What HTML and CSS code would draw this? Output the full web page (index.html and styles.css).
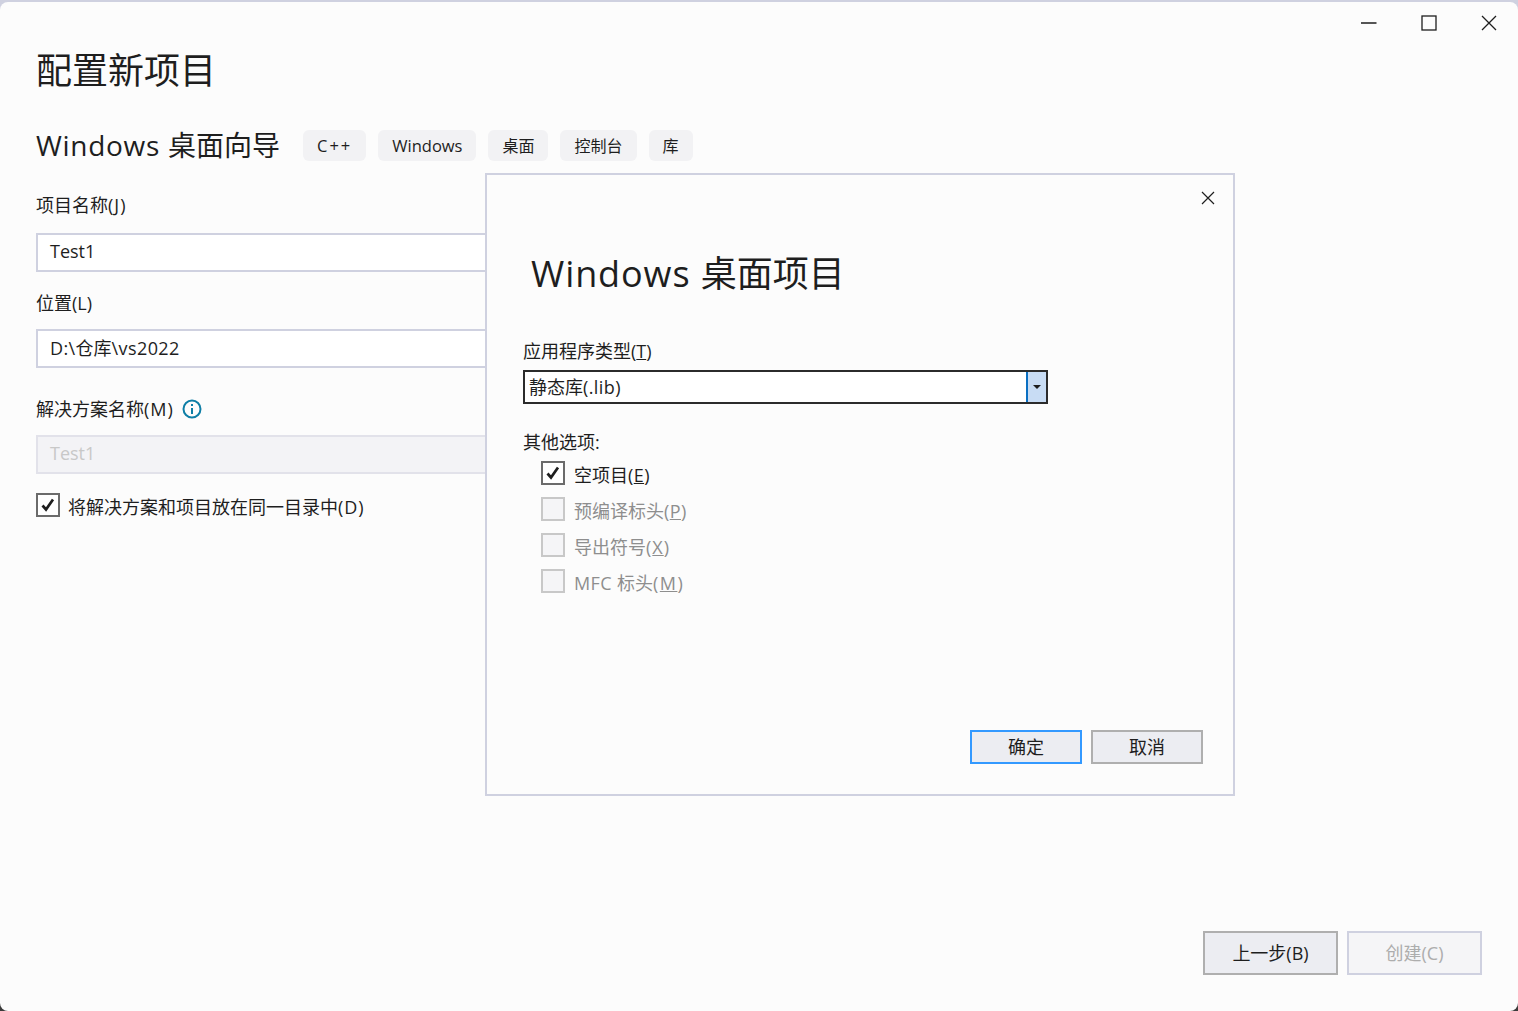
FILE: index.html
```html
<!DOCTYPE html>
<html lang="zh-CN">
<head>
<meta charset="utf-8">
<title>配置新项目</title>
<link rel="stylesheet" href="styles.css">
</head>
<body>
<div class="window">
  <div class="controls">
    <svg class="ctl" viewBox="0 0 16 16"><path d="M0 8h15.5" /></svg>
    <svg class="ctl" viewBox="0 0 16 16"><rect x="1" y="1" width="14" height="14" /></svg>
    <svg class="ctl" viewBox="0 0 16 16"><path d="M1 1l14 14M15 1L1 15" /></svg>
  </div>
  <main class="page">
    <h1 class="page-title">配置新项目</h1>
    <div class="subhead">
      <h2 class="subtitle"><span class="wide">Windows </span>桌面向导</h2>
      <div class="tags">
        <span class="tag tag-latin tag-plus">C++</span>
        <span class="tag tag-latin">Windows</span>
        <span class="tag">桌面</span>
        <span class="tag">控制台</span>
        <span class="tag">库</span>
      </div>
    </div>
    <form class="form">
      <div class="field-label first"><span>项目名称<span class="lat">(J)</span></span></div>
      <div class="input">Test1</div>
      <div class="field-label second"><span>位置(L)</span></div>
      <div class="input input-path"><span class="lat">D:\</span>仓库<span class="lat">\vs2022</span></div>
      <div class="field-label third"><span>解决方案名称<span class="lat">(M)</span></span>
        <svg class="info" viewBox="0 0 20 20"><circle cx="10" cy="10" r="8.5"/><path d="M10 9v6M10 5v2"/></svg>
      </div>
      <div class="input input-disabled">Test1</div>
      <label class="check check-main"><span class="box on"><svg viewBox="0 0 20 20"><path d="M4.5 10.5l3.5 4L15 4.5"/></svg></span><span class="check-text">将解决方案和项目放在同一目录中<span class="lat">(D)</span></span></label>
    </form>
    <div class="actions">
      <button class="btn btn-big" type="button">上一步(B)</button>
      <button class="btn btn-big btn-disabled" type="button">创建(C)</button>
    </div>
  </main>

  <section class="dialog">
    <div class="dialog-top">
      <svg class="dialog-close" viewBox="0 0 14 14"><path d="M1 1l12 12M13 1L1 13"/></svg>
    </div>
    <h2 class="dialog-title"><span class="wide">Windows </span>桌面项目</h2>
    <div class="dlabel">应用程序类型(<u>T</u>)</div>
    <div class="select">
      <span class="select-value">静态库<span class="lat-s">(.lib)</span></span>
      <span class="select-btn"><i class="caret"></i></span>
    </div>
    <div class="dlabel other">其他选项:</div>
    <div class="options">
      <label class="check opt"><span class="box on"><svg viewBox="0 0 20 20"><path d="M4.5 10.5l3.5 4L15 4.5"/></svg></span><span class="check-text">空项目<span class="lat-s">(<u>E</u>)</span></span></label>
      <label class="check opt off"><span class="box"></span><span class="check-text">预编译标头<span class="lat-s">(<u>P</u>)</span></span></label>
      <label class="check opt off"><span class="box"></span><span class="check-text">导出符号<span class="lat">(<u>X</u>)</span></span></label>
      <label class="check opt off"><span class="box"></span><span class="check-text"><span class="lat-s">MFC </span>标头<span class="lat-m">(<u>M</u>)</span></span></label>
    </div>
    <div class="dialog-actions">
      <button class="btn btn-small btn-primary" type="button">确定</button>
      <button class="btn btn-small" type="button">取消</button>
    </div>
  </section>
</div>
</body>
</html>
```
FILE: styles.css
```css
* { box-sizing: border-box; }
html, body { margin: 0; height: 100%; overflow: hidden; }
body {
  background: linear-gradient(#cfd1e0 0, #cfd1e0 60%, #3a3a3a 100%);
  font-family: "Open Sans", "Noto Sans CJK SC", sans-serif;
  font-size: 18px;
  color: #1e1e1e;
}
.window {
  position: relative;
  height: 1009px;
  margin-top: 2px;
  background: #fcfcfc;
  border-radius: 8px;
  overflow: hidden;
}
.controls {
  position: absolute;
  top: 13px;
  right: 21px;
  display: flex;
  gap: 44px;
}
.ctl { width: 16px; height: 16px; fill: none; stroke: #1e1e1e; stroke-width: 1.3; display: block; }
.page {
  height: 100%;
  padding: 0 36px 36px;
  display: flex;
  flex-direction: column;
}
.page-title { margin: 45px 0 0; font-size: 36px; line-height: 48px; font-weight: 400; }
.subhead { display: flex; align-items: center; margin-top: 35px; height: 31px; }
.subtitle { margin: 0; font-size: 28px; line-height: 31px; font-weight: 400; width: 267px; white-space: nowrap; }
.wide { letter-spacing: 0.7px; }
.dialog-title .wide { letter-spacing: 0.9px; }
.tags { display: flex; gap: 12px; }
.tag {
  height: 31px;
  padding: 0 14px;
  background: #f2f2f4;
  border-radius: 6px;
  font-size: 16px;
  line-height: 33px;
  white-space: nowrap;
}
.tag-latin { font-size: 16.5px; line-height: 31px; }
.tag-plus { letter-spacing: 2px; }
.form { width: 900px; display: flex; flex-direction: column; }
.field-label { line-height: 26px; display: flex; align-items: center; gap: 8px; }
.lat { letter-spacing: 1px; }
.lat-s { letter-spacing: 0.4px; }
.lat-m { letter-spacing: 1.4px; }
.input-path .lat { letter-spacing: 0.4px; }
.first { margin-top: 31px; margin-bottom: 15px; height: 26px; }
.second { margin-top: 18px; margin-bottom: 13px; }
.third { margin-top: 28px; margin-bottom: 13px; }
.input {
  height: 39px;
  padding-left: 12px;
  border: 2px solid #cfd1e0;
  background: #fff;
  line-height: 33px;
}
.input-path { line-height: 34px; }
.input-disabled { background: #f3f3f6; border-color: #e2e2ea; color: #c8c8c8; }
.info { width: 20px; height: 20px; fill: none; stroke: #0e7ea6; stroke-width: 2; }
.check { display: flex; align-items: center; white-space: nowrap; }
.check-main { margin-top: 19px; height: 24px; gap: 8px; }
.check-text { padding-top: 2px; }
.box {
  width: 24px;
  height: 24px;
  flex: none;
  border: 2px solid #6b6b6b;
  background: #fff;
  display: block;
}
.box svg { display: block; width: 20px; height: 20px; fill: none; stroke: #1e1e1e; stroke-width: 2.7; }
.actions { margin-top: auto; display: flex; justify-content: flex-end; gap: 9px; }
.btn {
  font-family: inherit;
  font-size: 18px;
  color: #1e1e1e;
  background: #ecedf2;
  border: 2px solid #afafaf;
  padding: 0;
}
.btn-big { width: 135px; height: 44px; padding-bottom: 2px; }
.btn-disabled { background: #f5f5f7; border-color: #cfd1e0; color: #adadad; }
.btn-small { width: 112px; height: 34px; line-height: 28px; }
.btn-primary { border-color: #3399ff; }
.dialog {
  position: absolute;
  left: 485px;
  top: 171px;
  width: 750px;
  height: 623px;
  background: #fcfcfc;
  border: 2px solid #cfd1e0;
  padding: 0 30px 0 36px;
  display: flex;
  flex-direction: column;
}
.dialog-top { height: 17px; display: flex; justify-content: flex-end; padding-top: 16px; margin-right: -12px; }
.dialog-close { width: 14px; height: 14px; fill: none; stroke: #1e1e1e; stroke-width: 1.2; flex: none; }
.dialog-title { margin: 58px 0 0 8px; font-size: 36px; line-height: 48px; font-weight: 400; white-space: nowrap; }
.dlabel { line-height: 26px; }
.dialog-title + .dlabel { margin-top: 40px; }
.select {
  width: 525px;
  height: 34px;
  margin-top: 6px;
  border: 2px solid #2b2b2b;
  background: #fff;
  display: flex;
  justify-content: space-between;
}
.select-value { padding-left: 4px; line-height: 30px; }
.select-btn {
  width: 20px;
  background: #c8dcf4;
  border-left: 2px solid #0a6fc2;
  display: flex;
  align-items: center;
  justify-content: center;
}
.caret { width: 0; height: 0; border: 4px solid transparent; border-top: 4px solid #1e1e1e; border-bottom: 0; }
.other { margin-top: 25px; }
.options { margin-top: 6px; padding-left: 18px; display: flex; flex-direction: column; gap: 12px; }
.opt { height: 24px; gap: 9px; }
.opt.off { color: #8e8e8e; }
.opt.off .box { background: #f5f5f7; border-color: #c8c8c8; }
.dialog-actions { margin-top: auto; margin-bottom: 30px; display: flex; justify-content: flex-end; gap: 9px; }
```
